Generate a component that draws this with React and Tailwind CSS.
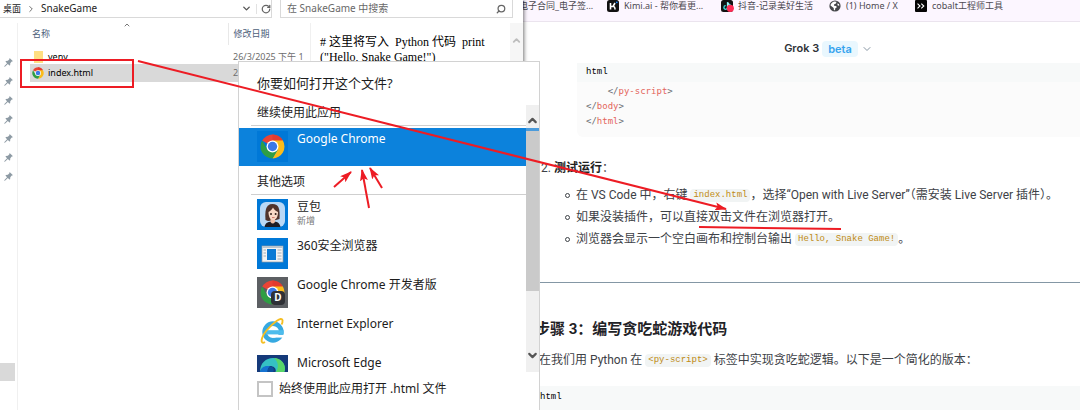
import React, { useState } from "react";
import { ChevronDown, ChevronRight, ChevronUp, RotateCw, Search } from "lucide-react";

const pins = [1, 2, 3, 4, 5, 6, 7];

const PinIcon = () => (
  <svg viewBox="0 0 10 10" className="h-[9px] w-[9px]" fill="#8d9aa4">
    <path d="M6.2 0 L10 3.6 L8.6 4 L7 5.8 L6.8 8 L6 8.4 L4.3 6.6 L1 9.6 L0.3 9.6 L0.5 8.9 L3.4 5.7 L1.6 4 L2.2 3.2 L4.3 3.1 L6 1.5 Z" />
  </svg>
);

const ChromeIcon = ({ className }) => (
  <svg viewBox="0 0 48 48" className={className}>
    <path d="M24 24 L4.1 12.5 A23 23 0 0 1 43.9 12.5 Z" fill="#ea4335" />
    <path d="M24 1 A23 23 0 0 1 43.9 12.5 L24 12.5 Z" fill="#e33b2e" />
    <path d="M43.9 12.5 A23 23 0 0 1 24 47 L34 30 L24 12.5 Z" fill="#fbbc1a" />
    <path d="M4.1 12.5 A23 23 0 0 0 24 47 L34 29.7 L14 29.7 Z" fill="#2f9e44" />
    <circle cx="24" cy="24" r="11.5" fill="#fff" />
    <circle cx="24" cy="24" r="9" fill="#3b78e7" />
  </svg>
);

const ChromeTile = () => (
  <div className="flex h-[31px] w-[31px] items-center justify-center bg-[#0078d7]">
    <ChromeIcon className="h-[25px] w-[25px]" />
  </div>
);

const DoubaoIcon = () => (
  <svg viewBox="0 0 31 31" className="h-[31px] w-[31px]">
    <rect width="31" height="31" fill="#0078d7" />
    <rect x="3" y="3" width="25" height="25" rx="6" fill="#b9d8f6" />
    <path d="M8.5 21 C8 13 8 5 15.5 5 C22 5 23 10 22.5 20 L19 21 L11 22 Z" fill="#50332c" />
    <path d="M7.5 28 C8.5 23 12 22.5 15.5 22.5 C20 22.5 22.5 23.5 23.5 28 Z" fill="#1d1c25" />
    <path d="M13.5 19 H18 V23 C16.5 25 15 25 13.5 23 Z" fill="#efc0a8" />
    <path d="M11.5 13 C13 12 15 10.5 16 8.5 C17 10.5 19 12 21 13 C21 18 19 21 16.2 21 C13.5 21 11.5 18 11.5 13 Z" fill="#f9d9c7" />
    <circle cx="14" cy="15" r="1" fill="#33211e" />
    <circle cx="18.6" cy="15" r="1" fill="#33211e" />
    <path d="M15 18.6 H17.6" stroke="#c3594f" strokeWidth="0.8" />
  </svg>
);

const WindowIcon = () => (
  <svg viewBox="0 0 31 31" className="h-[31px] w-[31px]">
    <rect width="31" height="31" fill="#0078d7" />
    <rect x="5" y="8" width="21" height="16" fill="#f3f3f3" stroke="#8d9aa5" strokeWidth="0.7" />
    <rect x="5.4" y="8" width="20.2" height="2" fill="#b9c5ce" />
    <rect x="10" y="11" width="9" height="11" fill="#0b7ad5" />
    <path d="M6.5 12 H9 M6.5 15 H9 M6.5 18 H9 M20.5 12 H24.5 M20.5 15 H24.5 M20.5 18 H24.5 M20.5 21 H24.5" stroke="#a5adb5" strokeWidth="1" />
  </svg>
);

const ChromeDevIcon = () => (
  <div className="relative flex h-[31px] w-[31px] items-center justify-center bg-[#5c5f63]">
    <ChromeIcon className="h-[25px] w-[25px]" />
    <span className="absolute right-[3px] bottom-[3px] flex h-[14px] w-[14px] items-center justify-center rounded-sm bg-[#2f3136] text-[10px] font-bold text-white">
      D
    </span>
  </div>
);

const IeIcon = () => (
  <svg viewBox="0 0 31 31" className="h-[31px] w-[31px]" fill="none">
    <circle cx="16" cy="16" r="8.4" stroke="#36a9e1" strokeWidth="4.6" />
    <path d="M17 18.8 H29 V21.6 H17 Z" fill="#fff" />
    <path d="M9 14.2 H26.5 V18.4 H9 Z" fill="#4dbcec" />
    <path d="M8 26 C3 29 3.5 22 9.5 14.5 C15.5 7.5 25 -0.5 25.5 4.5 C25.7 6 25 7.8 24.5 8.5" stroke="#f5be22" strokeWidth="1.9" />
  </svg>
);

const EdgeIcon = () => (
  <svg viewBox="0 0 31 31" className="h-[31px] w-[31px]">
    <rect width="31" height="31" fill="#153a7a" />
    <path d="M3 17 C3 8 9 3 16 3 C23 3 28 8 28 14 C28 19 23 20 18 18 C20 15 18 11 13 11 C8 11 4 14 3 17 Z" fill="#35c1c4" />
    <path d="M17 3 C24 3.5 28 8 28 14 C28 19 23 20 18 18 C22 14 22 7 17 3 Z" fill="#58d568" />
    <path d="M3 17 C4 12 9 10 13 11.5 C9 14 10 22 16 26 C8 29 2 24 3 17 Z" fill="#1673d1" />
    <path d="M13 11.5 C9 14 10 22 16 26 C21 26 25 24 27 20 C22 22 17 20 16 17 C18 14 16 11.5 13 11.5 Z" fill="#0d4f9e" />
  </svg>
);

const apps = [
  { name: "豆包", note: "新增", icon: DoubaoIcon },
  { name: "360安全浏览器", icon: WindowIcon },
  { name: "Google Chrome 开发者版", icon: ChromeDevIcon },
  { name: "Internet Explorer", icon: IeIcon },
  { name: "Microsoft Edge", icon: EdgeIcon },
];

const Explorer = () => (
  <section className="z-10 flex basis-[523px] shrink-0 flex-col bg-white font-['Noto_Sans','Noto_Sans_CJK_SC',sans-serif] text-[9px] shadow-[1px_0_4px_rgba(0,0,0,0.55)]">
    <div className="flex h-[18px] items-stretch">
      <nav className="flex w-[272px] items-center border-r border-b border-[#d9d9d9] pl-[3px] text-[#222]">
        <a href="#desktop">桌面</a>
        <ChevronRight className="mx-[5px] h-[10px] w-[10px]" color="#555" />
        <a href="#snake" className="text-[10px]">SnakeGame</a>
        <button aria-label="历史" className="ml-auto"><ChevronDown className="h-[11px] w-[11px]" strokeWidth={3} color="#555" /></button>
        <button aria-label="刷新" className="ml-1 border-l border-[#e2e2e2] pl-1"><RotateCw className="h-[10px] w-[10px]" strokeWidth={3} color="#666" /></button>
      </nav>
      <label className="mr-[10px] ml-2 flex flex-1 items-center border border-t-0 border-[#d9d9d9] px-[6px]">
        <input
          aria-label="搜索"
          placeholder="在 SnakeGame 中搜索"
          className="min-w-0 flex-1 text-[10px] outline-none placeholder:text-[#686868]"
        />
        <Search className="h-[10px] w-[10px] -scale-x-100" strokeWidth={3} color="#666" />
      </label>
    </div>

    <div className="flex flex-1 pt-[5px]">
      <div className="flex w-[18px] flex-col border-r border-[#f0f0f0] pt-[30px]">
        {pins.map((pin) => (
          <div key={pin} className="flex h-[19px] items-center justify-center">
            <PinIcon />
          </div>
        ))}
        <div className="mt-[177px] h-[18px] w-[15px] bg-[#d9d9d9]" />
      </div>

      <table className="ml-3 w-[280px] table-fixed self-start text-left">
        <thead>
          <tr className="h-[22px] text-[#4c607a]">
            <th className="relative w-[198px] border-r border-[#e8e8e8] pl-[2px] font-normal">
              名称
              <ChevronUp className="absolute -top-[2px] left-[93px] h-2 w-2" strokeWidth={3} color="#777" />
            </th>
            <th className="pl-[5px] font-normal">修改日期</th>
          </tr>
        </thead>
        <tbody>
          <tr className="h-[19px]">
            <td className="pt-1 pl-1">
              <span className="flex items-center gap-[5px]">
                <span className="h-[12px] w-[9px] bg-[#ffdf82]" />
                <span>venv</span>
              </span>
            </td>
            <td className="overflow-hidden pt-1 pl-[5px] whitespace-nowrap text-[#6d6d6d]">26/3/2025 下午 1</td>
          </tr>
          <tr className="h-[18px] bg-[#d9d9d9]">
            <td className="pl-[2px]">
              <a href="#index" className="flex items-center gap-1">
                <ChromeIcon className="h-[12px] w-[12px]" />
                index.html
              </a>
            </td>
            <td className="pl-[5px] text-[#6d6d6d]">2</td>
          </tr>
        </tbody>
      </table>

      <div className="flex flex-1 border-l border-[#f0f0f0]">
        <p className="flex-1 pt-3 pl-[9px] font-['Liberation_Serif','Noto_Sans_CJK_SC',serif] text-xs leading-[15px] whitespace-pre text-black">
          {"# 这里将写入  Python 代码  print\n(\"Hello, Snake Game!\")"}
        </p>
        <div className="flex w-[13px] justify-center bg-[#f6f6f6] pt-3">
          <ChevronUp className="h-[11px] w-[11px]" strokeWidth={4} color="#bdbdbd" />
        </div>
      </div>
    </div>
  </section>
);

const OpenWithDialog = () => {
  const [always, setAlways] = useState(false);

  return (
    <div
      role="dialog"
      aria-label="你要如何打开这个文件?"
      className="absolute top-[61px] bottom-0 left-[238px] z-20 w-[302px] border border-b-0 border-[#d2d2d2] bg-white font-['Noto_Sans','Noto_Sans_CJK_SC',sans-serif] text-xs text-[#1c1c1c]"
    >
      <h2 className="flex h-[43px] items-center pl-[18px] text-[13px]">你要如何打开这个文件?</h2>

      <div className="flex h-[267px]">
        <div className="flex-1 overflow-hidden">
          <div className="ml-3 flex h-[21px] items-center border-b border-[#cfcfcf] pb-[5px] pl-[6px]">继续使用此应用</div>
          <button className="mt-[2px] flex h-[38px] w-full items-start bg-[#0c82dc] pt-[3px] pl-[18px] text-left text-white">
            <ChromeTile />
            <span className="ml-[9px] leading-4">Google Chrome</span>
          </button>
          <div className="ml-3 flex h-[29px] items-center border-b border-[#cfcfcf] pt-[3px] pl-[6px]">其他选项</div>
          <div className="mt-1 flex flex-col gap-2 pl-[18px]">
            {apps.map((app) => {
              const Icon = app.icon;
              return (
                <button key={app.name} className="flex h-[31px] items-start text-left">
                  <Icon />
                  <span className="ml-[9px]">
                    <span className="block leading-4">{app.name}</span>
                    {app.note && <span className="block text-[9px] leading-[11px] text-[#777]">{app.note}</span>}
                  </span>
                </button>
              );
            })}
          </div>
        </div>

        <div className="flex w-[13px] flex-col items-center bg-[#f0f0f0]">
          <div className="flex h-[23px] items-end pb-[1px]">
            <ChevronUp className="h-[13px] w-[13px]" strokeWidth={4} color="#555" />
          </div>
          <div className="h-[3px] w-full bg-[#4b9bdb]" />
          <div className="h-[160px] w-full bg-[#cacaca]" />
          <ChevronDown className="mt-auto mb-[10px] h-[13px] w-[13px]" strokeWidth={4} color="#555" />
        </div>
      </div>

      <label className="mt-[9px] flex items-center gap-[6px] pl-[18px]">
        <input
          type="checkbox"
          checked={always}
          onChange={(e) => setAlways(e.target.checked)}
          className="h-4 w-4 appearance-none border-2 border-[#c4c4c4] bg-white checked:bg-[#0078d7]"
        />
        始终使用此应用打开 .html 文件
      </label>
    </div>
  );
};

const InlineCode = ({ children }) => (
  <code className="inline-block rounded-sm bg-[#f1f4f4] px-[3px] py-px align-middle font-['Liberation_Mono','Noto_Sans_CJK_SC',monospace] text-[9px] leading-[11px] text-[#c08a12]">
    {children}
  </code>
);

const Tag = ({ children }) => (
  <>
    &lt;/<span className="text-[#e4655b]">{children}</span>&gt;
  </>
);

const KimiIcon = () => (
  <svg viewBox="0 0 12 12" className="h-[12px] w-[12px]">
    <rect width="12" height="12" rx="2.5" fill="#111" />
    <path d="M3.5 3 V9.5 M3.5 6.5 H6 L8 3 M6 6.5 C8 6.5 8 7.5 8 9.5" stroke="#fff" strokeWidth="1.6" fill="none" />
    <circle cx="9.8" cy="2.3" r="0.9" fill="#1783ff" />
  </svg>
);

const DouyinIcon = () => (
  <svg viewBox="0 0 13 12" className="h-[12px] w-[13px]">
    <rect width="12" height="12" rx="2.5" fill="#111" />
    <path d="M6.5 2 V7.5 A1.8 1.8 0 1 1 4.7 5.7 M6.5 2.5 C7 4 8 4.6 9.5 4.7" stroke="#3be0e0" strokeWidth="1.3" fill="none" />
    <path d="M7 2.5 V8" stroke="#fff" strokeWidth="1" />
    <circle cx="9.3" cy="8.3" r="3.6" fill="#fe2c55" />
  </svg>
);

const GlobeIcon = () => (
  <svg viewBox="0 0 12 12" className="h-[12px] w-[12px]">
    <circle cx="6" cy="6" r="5.6" fill="#45474a" />
    <path d="M5 1.5 L7.5 1.7 L7 3.5 L5.2 4.2 L5 5.8 L7.3 6.1 L7.7 7.5 L6.3 8.2 L6 10.4 L4.8 9.8 L4.7 8 L1.5 5.5 C1.6 4 3 2 5 1.5 Z" fill="#fff" />
    <path d="M8.2 3.5 L10 4 L10.3 5.8 L8.8 5.5 Z" fill="#fff" />
  </svg>
);

const CobaltIcon = () => (
  <svg viewBox="0 0 12 12" className="h-[12px] w-[12px]">
    <rect width="12" height="12" rx="1" fill="#050505" />
    <path d="M2.5 3.7 L5 6 L2.5 8.3 M6.3 3.7 L8.8 6 L6.3 8.3" stroke="#fff" strokeWidth="1.1" fill="none" />
  </svg>
);

const Browser = () => (
  <main className="min-w-0 flex-1 overflow-hidden bg-white font-['Roboto','Noto_Sans_CJK_SC',sans-serif] text-xs text-[#3d4146]">
    <nav className="flex h-[22px] items-start overflow-hidden border-b border-[#ebe4ee] bg-[#fcf6ff] font-['Noto_Sans','Noto_Sans_CJK_SC',sans-serif] text-[9px] leading-3 whitespace-nowrap text-[#4c4951]">
      <a href="#sign" className="-ml-1 w-[88px]">电子合同_电子签...</a>
      <a href="#kimi" className="flex w-[114px] gap-[5px]"><KimiIcon />Kimi.ai - 帮你看更...</a>
      <a href="#douyin" className="flex w-[108px] gap-1"><DouyinIcon />抖音-记录美好生活</a>
      <a href="#x" className="flex w-[86px] gap-[5px]"><GlobeIcon />(1) Home / X</a>
      <a href="#cobalt" className="flex gap-[5px]"><CobaltIcon />cobalt工程师工具</a>
    </nav>

    <header className="flex h-[41px] items-center justify-center gap-[3px] pt-3 pl-[54px] font-['Inter',sans-serif] text-[11px] font-semibold text-[#303338]">
      Grok 3
      <span className="rounded bg-[#e9f7fe] px-[6px] leading-4 text-[#35a3ee]">beta</span>
      <button aria-label="选择模型"><ChevronDown className="h-3 w-3" color="#8796a3" /></button>
    </header>

    <article>
      <div className="ml-[54px] overflow-hidden rounded-bl-md bg-[#fbfbfb]">
        <div className="h-[19px] bg-[#f7f9f9] pl-[9px] font-['Liberation_Mono',monospace] text-[9px] leading-[19px] text-black">html</div>
        <pre className="pt-[2px] pb-2 pl-[9px] font-['DejaVu_Sans_Mono',monospace] text-[9px] leading-[15px] text-[#6b6f75]">
          {"    "}<Tag>py-script</Tag>{"\n"}
          <Tag>body</Tag>{"\n"}
          <Tag>html</Tag>
        </pre>
      </div>

      <ol start={2} className="mt-[22px] ml-[31px] list-decimal">
        <li className="leading-[18px]">
          <strong className="text-[#222]">测试运行</strong>：
          <ul className="mt-[7px] ml-[22px] list-none leading-[22px] whitespace-nowrap">
            {[
              <>在 VS Code 中，右键 <InlineCode>index.html</InlineCode>，选择“Open with Live Server”（需安装 Live Server 插件）。</>,
              <>如果没装插件，可以直接双击文件在浏览器打开。</>,
              <>浏览器会显示一个空白画布和控制台输出 <InlineCode>Hello, Snake Game!</InlineCode>。</>,
            ].map((item, i) => (
              <li key={i} className="relative">
                <span className="absolute top-[9px] -left-[11px] h-[5px] w-[5px] rounded-full border border-[#3d4146]" />
                {item}
              </li>
            ))}
          </ul>
        </li>
      </ol>

      <hr className="mt-8 border-[#8497a5]" />

      <h3 className="mt-[35px] ml-3 text-[15px] leading-[22px] font-bold whitespace-nowrap text-[#1f2226]">步骤 3：编写贪吃蛇游戏代码</h3>
      <p className="mt-[9px] ml-1 leading-[22px] whitespace-nowrap">
        现在我们用 Python 在 <InlineCode>&lt;py-script&gt;</InlineCode> 标签中实现贪吃蛇逻辑。以下是一个简化的版本：
      </p>

      <div className="mt-[15px] ml-2 h-[25px] bg-[#f7f9f9] pl-[9px] font-['Liberation_Mono',monospace] text-[9px] leading-[22px] text-black">html</div>
    </article>
  </main>
);

const Annotations = () => (
  <svg viewBox="0 0 1080 410" className="pointer-events-none absolute top-0 left-0 z-30 h-[410px] w-[1080px]" fill="none" stroke="#ed1c24" strokeWidth="2">
    <defs>
      <marker id="head" viewBox="0 0 12 8" refX="11" refY="4" markerWidth="12" markerHeight="8" markerUnits="userSpaceOnUse" orient="auto">
        <path d="M0 0 L12 4 L0 8 L2.5 4 Z" fill="#ed1c24" stroke="none" />
      </marker>
    </defs>
    <rect x="21" y="60" width="112" height="27" />
    <path d="M138 61 L726 209" markerEnd="url(#head)" />
    <path d="M334 187 L351 172" markerEnd="url(#head)" />
    <path d="M369 208 L362 170" markerEnd="url(#head)" />
    <path d="M382 188 L370 168" markerEnd="url(#head)" />
    <path d="M699 227 L841 229" />
  </svg>
);

const App = () => {
  return (
    <div className="relative flex h-screen min-h-[410px] overflow-hidden">
      <Explorer />
      <Browser />
      <OpenWithDialog />
      <Annotations />
    </div>
  );
};

export default App;
